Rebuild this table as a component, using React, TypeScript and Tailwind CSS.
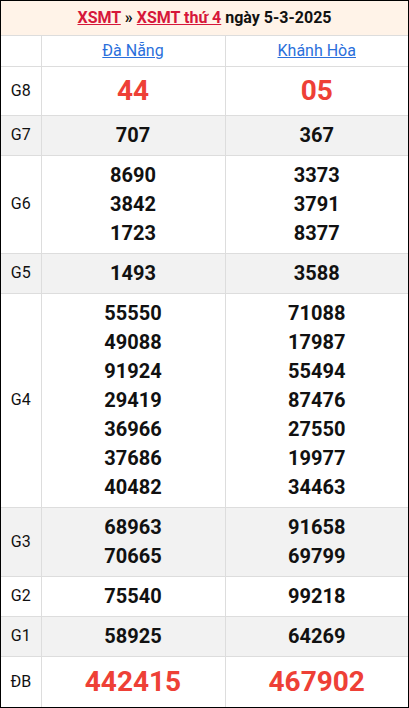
import React from "react";

type Row = { label: string; a: string[]; b: string[]; big?: boolean; gray?: boolean; h?: string };

const rows: Row[] = [
  { label: "G8", a: ["44"], b: ["05"], big: true, h: "h-[49px]" },
  { label: "G7", a: ["707"], b: ["367"], gray: true },
  { label: "G6", a: ["8690", "3842", "1723"], b: ["3373", "3791", "8377"] },
  { label: "G5", a: ["1493"], b: ["3588"], gray: true },
  {
    label: "G4",
    a: ["55550", "49088", "91924", "29419", "36966", "37686", "40482"],
    b: ["71088", "17987", "55494", "87476", "27550", "19977", "34463"],
  },
  { label: "G3", a: ["68963", "70665"], b: ["91658", "69799"], gray: true },
  { label: "G2", a: ["75540"], b: ["99218"] },
  { label: "G1", a: ["58925"], b: ["64269"], gray: true },
  { label: "ĐB", a: ["442415"], b: ["467902"], big: true, h: "h-[51px]" },
];

function Cell({ nums, big }: { nums: string[]; big?: boolean }) {
  return (
    <td className={"border border-[#dddddd] text-center align-middle " + (big ? "" : "py-[5px]")}>
      {nums.map((n, i) => (
        <div
          key={i}
          className={
            big
              ? "text-[28px] leading-[34px] font-bold text-[#ee4036]"
              : "text-[20px] leading-[29px] font-bold text-[#111111]"
          }
        >
          {n}
        </div>
      ))}
    </td>
  );
}

export default function App() {
  return (
    <div
      className="w-[409px] bg-white border border-black"
      style={{ fontFamily: "Roboto, 'Liberation Sans', sans-serif" }}
    >
      <table className="w-full border-collapse border-hidden table-fixed">
        <colgroup>
          <col className="w-[40px]" />
          <col className="w-[184px]" />
          <col />
        </colgroup>
        <thead>
          <tr>
            <th
              colSpan={3}
              className="h-[34px] bg-[#fff3e8] border border-[#dddddd] text-[16px] font-bold text-[#111111] text-center"
            >
              <a className="text-[#d6173a] underline">XSMT</a> »{" "}
              <a className="text-[#d6173a] underline">XSMT thứ 4</a> ngày 5-3-2025
            </th>
          </tr>
          <tr>
            <th className="h-[31px] border border-[#dddddd]"></th>
            <th className="border border-[#dddddd] text-[16px] font-normal text-center">
              <a className="text-[#2a6fdb] underline">Đà Nẵng</a>
            </th>
            <th className="border border-[#dddddd] text-[16px] font-normal text-center">
              <a className="text-[#2a6fdb] underline">Khánh Hòa</a>
            </th>
          </tr>
        </thead>
        <tbody>
          {rows.map((r) => (
            <tr key={r.label} className={r.gray ? "bg-[#f2f2f2]" : "bg-white"}>
              <td
                className={
                  "border border-[#dddddd] text-center text-[16px] text-[#111111] " +
                  (r.big ? r.h : "py-[5px]")
                }
              >
                {r.label}
              </td>
              <Cell nums={r.a} big={r.big} />
              <Cell nums={r.b} big={r.big} />
            </tr>
          ))}
        </tbody>
      </table>
    </div>
  );
}
